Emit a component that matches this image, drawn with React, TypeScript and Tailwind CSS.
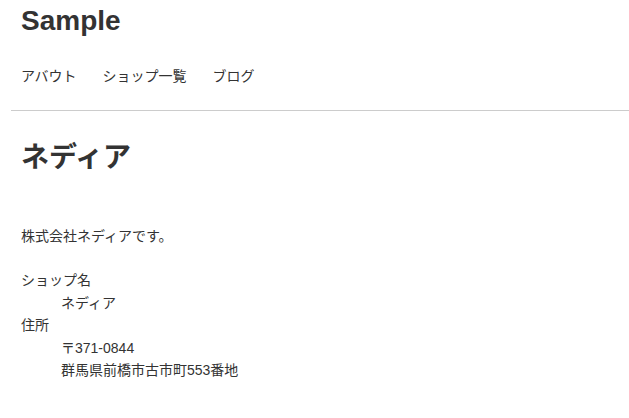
export default function App() {
  const font = {
    fontFamily: '"Liberation Sans", Arial, "Noto Sans CJK JP", sans-serif',
  };
  return (
    <div className="min-h-screen bg-white text-[#333]" style={font}>
      <header className="pl-[21px] pr-4">
        <h1 className="pt-[4px] text-[28px] font-bold leading-[34px]">Sample</h1>
        <nav className="mt-[27px] flex gap-[26px] text-[14px] leading-[22px]">
          <a href="#">アバウト</a>
          <a href="#">ショップ一覧</a>
          <a href="#">ブログ</a>
        </nav>
      </header>
      <hr className="ml-[11px] mt-[23px] border-t border-[#ccc]" />
      <main className="pl-[21px] pr-4">
        <h2 className="mt-[30px] text-[28px] font-bold leading-[34px]">ネディア</h2>
        <p className="mt-[50px] text-[14px] leading-[22px]">株式会社ネディアです。</p>
        <dl className="mt-[22px] text-[14px] leading-[22.5px]">
          <dt>ショップ名</dt>
          <dd className="ml-[40px]">ネディア</dd>
          <dt>住所</dt>
          <dd className="ml-[40px]">〒371-0844</dd>
          <dd className="ml-[40px]">群馬県前橋市古市町553番地</dd>
        </dl>
      </main>
    </div>
  );
}
